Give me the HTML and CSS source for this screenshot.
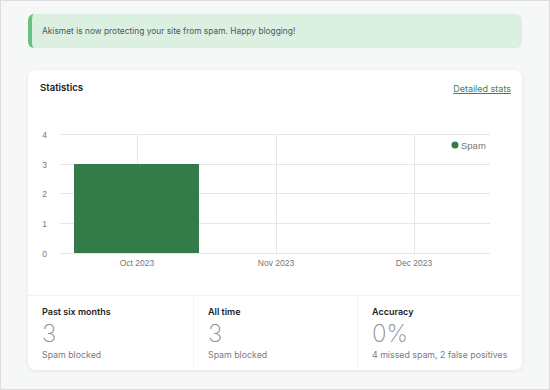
FILE: index.html
```html
<!DOCTYPE html>
<html lang="en">
<head>
    <meta charset="UTF-8">
    <title>Akismet Stats</title>
    <link rel="stylesheet" href="styles.css">
</head>
<body>

<div class="page">
    <div class="notice">Akismet is now protecting your site from spam. Happy blogging!</div>

    <div class="card">
        <div class="card-head">
            <h2>Statistics</h2>
            <a href="#" class="stats-link">Detailed stats</a>
        </div>

        <svg class="chart" width="494" height="185" viewBox="0 0 494 185">
            <!-- grid -->
            <g class="grid">
                <line x1="32" y1="24.5" x2="462" y2="24.5"/>
                <line x1="32" y1="54.5" x2="462" y2="54.5"/>
                <line x1="32" y1="83.5" x2="462" y2="83.5"/>
                <line x1="32" y1="113.5" x2="462" y2="113.5"/>
                <line x1="32" y1="143.5" x2="462" y2="143.5"/>
                <line x1="109.5" y1="24" x2="109.5" y2="143"/>
                <line x1="248.5" y1="24" x2="248.5" y2="143"/>
                <line x1="386.5" y1="24" x2="386.5" y2="143"/>
            </g>
            <rect class="bar" x="46" y="54" width="125" height="89"/>
            <g class="axis">
                <text x="19" y="27.5" text-anchor="end">4</text>
                <text x="19" y="57.5" text-anchor="end">3</text>
                <text x="19" y="86.5" text-anchor="end">2</text>
                <text x="19" y="116.5" text-anchor="end">1</text>
                <text x="19" y="146.5" text-anchor="end">0</text>
                <text x="109" y="155.5" text-anchor="middle">Oct 2023</text>
                <text x="248" y="155.5" text-anchor="middle">Nov 2023</text>
                <text x="386" y="155.5" text-anchor="middle">Dec 2023</text>
            </g>
            <circle class="dot" cx="427" cy="35" r="3.5"/>
            <text class="legend" x="433" y="38.5">Spam</text>
        </svg>

        <div class="stats">
            <div class="stat">
                <h3>Past six months</h3>
                <div class="num">3</div>
                <div class="sub">Spam blocked</div>
            </div>
            <div class="stat">
                <h3>All time</h3>
                <div class="num">3</div>
                <div class="sub">Spam blocked</div>
            </div>
            <div class="stat">
                <h3>Accuracy</h3>
                <div class="num">0%</div>
                <div class="sub">4 missed spam, 2 false positives</div>
            </div>
        </div>
    </div>
</div>

</body>
</html>
```

FILE: styles.css
```css
body {
    margin: 0;
    font-family: Inter, "Liberation Sans", sans-serif;
    background: #f6f7f7;
}
.page {
    box-sizing: border-box;
    width: 550px;
    height: 390px;
    border: 1px solid #dcdcde;
    padding: 13px 27px 0;
}
.notice {
    box-sizing: border-box;
    height: 34px;
    display: flex;
    align-items: center;
    padding-left: 10px;
    background: #dbf0e0;
    border-left: 4px solid #68c17e;
    border-radius: 6px;
    font-size: 8.4px;
    color: #50575e;
}
.card {
    margin-top: 22px;
    height: 300px;
    background: #fff;
    border-radius: 7px;
    box-shadow: 0 1px 4px rgba(0, 0, 0, 0.08);
    display: flex;
    flex-direction: column;
}
.card-head {
    height: 40px;
    display: flex;
    justify-content: space-between;
    align-items: flex-start;
    padding: 12px 11px 0 12px;
    box-sizing: border-box;
}
.card-head h2 {
    margin: 0;
    font-size: 9.6px;
    font-weight: 600;
    color: #1d2327;
}
.stats-link {
    font-size: 9px;
    color: #3b8552;
    margin-top: 1px;
}
.chart {
    display: block;
}
.grid line {
    stroke: #e6e6e6;
    stroke-width: 1;
}
.bar {
    fill: #357b49;
}
.axis text {
    font-family: "Liberation Sans", Arial, sans-serif;
    font-size: 8.5px;
    fill: #777;
}
.dot {
    fill: #357b49;
}
.legend {
    font-family: "Liberation Sans", Arial, sans-serif;
    font-size: 9.5px;
    fill: #777;
}
.stats {
    flex: 1;
    display: grid;
    grid-template-columns: 166px 164px 1fr;
    border-top: 1px solid #f3f3f3;
}
.stat {
    padding: 10px 0 0 14px;
    border-right: 1px solid #f3f3f3;
}
.stat:last-child {
    border-right: none;
}
.stat h3 {
    margin: 0;
    font-size: 9px;
    font-weight: 600;
    color: #1d2327;
}
.num {
    font-size: 24px;
    font-weight: 200;
    line-height: 26px;
    margin-top: 4px;
    color: #8c8f94;
}
.sub {
    margin-top: 2px;
    font-size: 8.8px;
    color: #787c82;
}
```
